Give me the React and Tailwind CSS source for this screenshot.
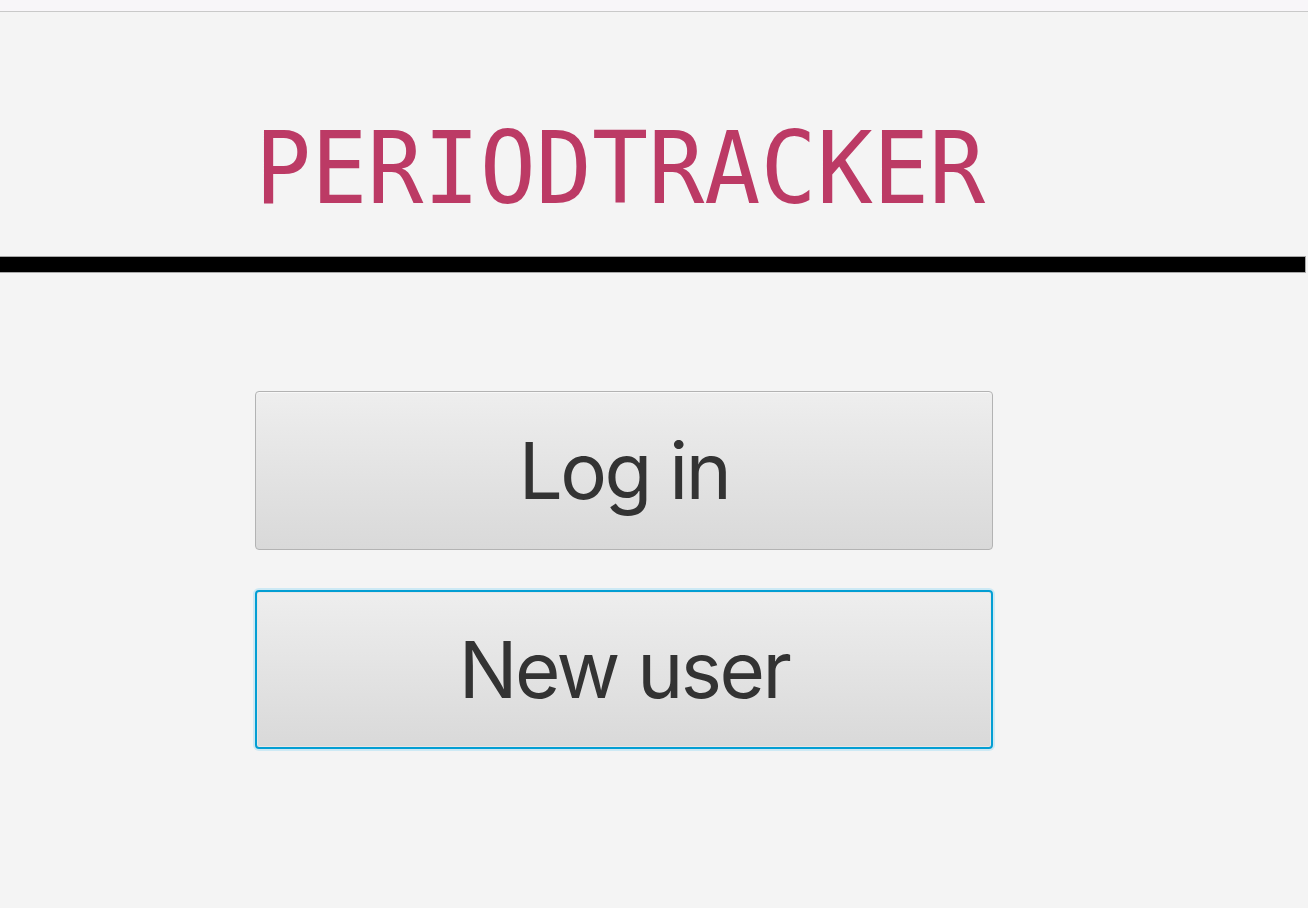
import React from 'react';

const App = () => {
  return (
    <div className="w-[1308px] h-[908px] bg-[#f4f4f4] flex flex-col overflow-hidden">
      {/* top strip */}
      <div className="h-[12px] bg-[#f8f6f9] border-b border-[#c9c9c9] shrink-0" />

      {/* title */}
      <div className="h-[244px] shrink-0 flex items-start pl-[255px] pt-[107px]">
        <h1
          className="text-[100px] leading-none text-[#bc3a65] origin-left scale-x-[0.933] whitespace-nowrap"
          style={{ fontFamily: '"DejaVu Sans Mono", monospace' }}
        >
          PERIODTRACKER
        </h1>
      </div>

      {/* divider */}
      <div className="h-[17px] w-[1306px] bg-black border-y border-r border-[#a8a8a8] shrink-0" />

      {/* buttons */}
      <div className="flex flex-col gap-[40px] pl-[255px] pt-[118px]">
        <button
          className="w-[738px] h-[159px] rounded-[4px] border border-[#b3b3b3] bg-gradient-to-b from-[#eeeeee] to-[#d9d9d9] shadow-[inset_0_1px_0_#f8f8f8] text-[#333333] text-[78px] tracking-[-2.5px] leading-none flex items-center justify-center"
          style={{ fontFamily: 'Inter, "Noto Sans", sans-serif' }}
        >
          Log in
        </button>
        <button
          className="w-[738px] h-[159px] rounded-[4px] border-2 border-[#039ed3] bg-gradient-to-b from-[#eeeeee] to-[#d9d9d9] shadow-[0_0_0_2px_#cde9f4,inset_0_0_0_1px_#e6e6e6] text-[#333333] text-[78px] tracking-[-2.5px] leading-none flex items-center justify-center"
          style={{ fontFamily: 'Inter, "Noto Sans", sans-serif' }}
        >
          New user
        </button>
      </div>
    </div>
  );
};

export default App;
